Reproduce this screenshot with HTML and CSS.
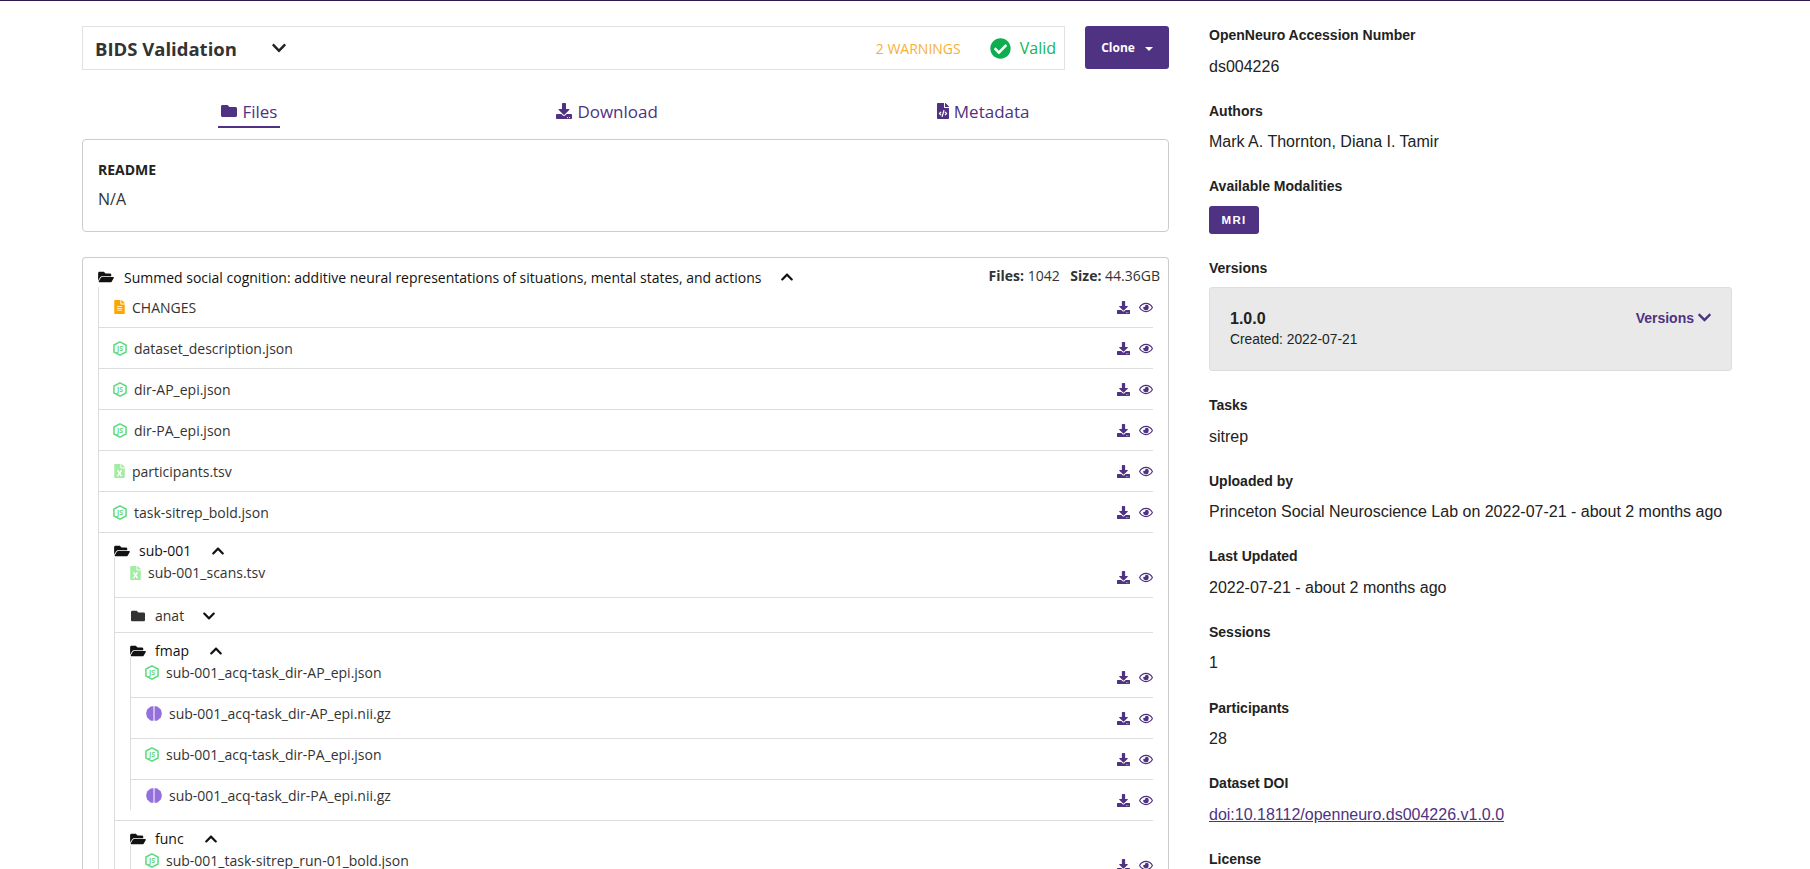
FILE: index.html
```html
<!DOCTYPE html>
<html lang="en">
<head>
    <meta charset="UTF-8" />
    <title>OpenNeuro Dataset ds004226</title>
    <link rel="stylesheet" href="styles.css">
</head>
<body>
    <svg class="sprite" xmlns="http://www.w3.org/2000/svg">
        <symbol id="i-folder" viewBox="0 0 512 512"><path d="M464 128H272l-64-64H48C21.49 64 0 85.49 0 112v288c0 26.51 21.49 48 48 48h416c26.51 0 48-21.49 48-48V176c0-26.51-21.49-48-48-48z"/></symbol>
        <symbol id="i-open" viewBox="0 0 576 512"><path d="M572.694 292.093L500.27 416.248A63.997 63.997 0 0 1 444.989 448H45.025c-18.523 0-30.064-20.093-20.731-36.093l72.424-124.155A64 64 0 0 1 152 256h399.964c18.523 0 30.064 20.093 20.73 36.093zM152 224h328v-48c0-26.51-21.49-48-48-48H272l-64-64H48C21.49 64 0 85.49 0 112v278.046l69.077-118.418C86.214 242.25 117.989 224 152 224z"/></symbol>
        <symbol id="i-download" viewBox="0 0 512 512"><path d="M216 0h80c13.3 0 24 10.7 24 24v168h87.7c17.8 0 26.7 21.5 14.1 34.1L269.7 378.3c-7.5 7.5-19.8 7.5-27.3 0L90.1 226.1c-12.6-12.6-3.7-34.1 14.1-34.1H192V24c0-13.3 10.7-24 24-24zm296 376v112c0 13.3-10.7 24-24 24H24c-13.3 0-24-10.7-24-24V376c0-13.3 10.7-24 24-24h146.7l49 49c20.1 20.1 52.5 20.1 72.6 0l49-49H488c13.3 0 24 10.7 24 24zm-124 88c0-11-9-20-20-20s-20 9-20 20 9 20 20 20 20-9 20-20zm64 0c0-11-9-20-20-20s-20 9-20 20 9 20 20 20 20-9 20-20z"/></symbol>
        <symbol id="i-eye" viewBox="0 0 576 512"><path d="M288 144a110.94 110.94 0 0 0-31.24 5 55.4 55.4 0 0 1 7.24 27 56 56 0 0 1-56 56 55.4 55.4 0 0 1-27-7.24A111.71 111.71 0 1 0 288 144zm284.52 97.4C518.29 135.59 410.93 64 288 64S57.68 135.64 3.48 241.41a32.35 32.35 0 0 0 0 29.19C57.71 376.41 165.07 448 288 448s230.32-71.64 284.52-177.41a32.35 32.35 0 0 0 0-29.19zM288 400c-98.65 0-189.09-55-237.93-144C98.91 167 189.34 112 288 112s189.09 55 237.93 144C477.1 345 386.66 400 288 400z"/></symbol>
        <symbol id="i-check" viewBox="0 0 512 512"><path d="M504 256c0 136.967-111.033 248-248 248S8 392.967 8 256 119.033 8 256 8s248 111.033 248 248zM227.314 387.314l184-184c6.248-6.248 6.248-16.379 0-22.627l-22.627-22.627c-6.248-6.249-16.379-6.249-22.628 0L216 308.118l-70.059-70.059c-6.248-6.248-16.379-6.248-22.628 0l-22.627 22.627c-6.248 6.248-6.248 16.379 0 22.627l104 104c6.249 6.25 16.379 6.25 22.628.001z"/></symbol>
        <symbol id="i-down" viewBox="0 0 448 512"><path d="M207.029 381.476L12.686 187.132c-9.373-9.373-9.373-24.569 0-33.941l22.667-22.667c9.357-9.357 24.522-9.375 33.901-.04L224 284.505l154.745-154.021c9.379-9.335 24.544-9.317 33.901.04l22.667 22.667c9.373 9.373 9.373 24.569 0 33.941L240.971 381.476c-9.373 9.372-24.569 9.372-33.942 0z"/></symbol>
        <symbol id="i-up" viewBox="0 0 448 512"><path d="M240.971 130.524l194.343 194.343c9.373 9.373 9.373 24.569 0 33.941l-22.667 22.667c-9.357 9.357-24.522 9.375-33.901.04L224 227.495 69.255 381.516c-9.379 9.335-24.544 9.317-33.901-.04l-22.667-22.667c-9.373-9.373-9.373-24.569 0-33.941L207.03 130.525c9.372-9.373 24.568-9.373 33.941-.001z"/></symbol>
        <symbol id="i-text" viewBox="0 0 384 512"><path d="M224 136V0H24C10.7 0 0 10.7 0 24v464c0 13.3 10.7 24 24 24h336c13.3 0 24-10.7 24-24V160H248c-13.2 0-24-10.8-24-24zm64 236c0 6.6-5.4 12-12 12H108c-6.6 0-12-5.4-12-12v-8c0-6.6 5.4-12 12-12h168c6.6 0 12 5.4 12 12v8zm0-64c0 6.6-5.4 12-12 12H108c-6.6 0-12-5.4-12-12v-8c0-6.6 5.4-12 12-12h168c6.6 0 12 5.4 12 12v8zm0-72v8c0 6.6-5.4 12-12 12H108c-6.6 0-12-5.4-12-12v-8c0-6.6 5.4-12 12-12h168c6.6 0 12 5.4 12 12zm96-114.1v6.1H256V0h6.1c6.4 0 12.5 2.5 17 7l97.9 98c4.5 4.5 7 10.6 7 16.9z"/></symbol>
        <symbol id="i-excel" viewBox="0 0 384 512"><path d="M224 136V0H24C10.7 0 0 10.7 0 24v464c0 13.3 10.7 24 24 24h336c13.3 0 24-10.7 24-24V160H248c-13.2 0-24-10.8-24-24zm60.1 106.5L224 336l60.1 93.5c5.1 8-.6 18.5-10.1 18.5h-34.9c-4.4 0-8.5-2.4-10.6-6.3C208.9 405.5 192 373 192 373c-6.4 14.8-10 20-36.6 68.8-2.1 3.9-6.1 6.3-10.5 6.3H110c-9.5 0-15.2-10.5-10.1-18.5l60.3-93.5-60.3-93.5c-5.2-8 .6-18.5 10.1-18.5h34.8c4.4 0 8.5 2.4 10.6 6.3 26.1 48.8 20 33.6 36.6 68.5 0 0 6.1-11.7 36.6-68.5 2.1-3.9 6.2-6.3 10.6-6.3H274c9.5-.1 15.2 10.4 10.1 18.4zM384 121.9v6.1H256V0h6.1c6.4 0 12.5 2.5 17 7l97.9 98c4.5 4.5 7 10.6 7 16.9z"/></symbol>
        <symbol id="i-code" viewBox="0 0 384 512"><path d="M384 121.941V128H256V0h6.059c6.365 0 12.47 2.529 16.971 7.029l97.941 97.941A24.005 24.005 0 0 1 384 121.941zM248 160c-13.2 0-24-10.8-24-24V0H24C10.745 0 0 10.745 0 24v464c0 13.255 10.745 24 24 24h336c13.255 0 24-10.745 24-24V160H248zM123.206 400.505a5.4 5.4 0 0 1-7.633.246l-64.866-60.812a5.4 5.4 0 0 1 0-7.879l64.866-60.812a5.4 5.4 0 0 1 7.633.246l19.579 20.885a5.4 5.4 0 0 1-.372 7.747L101.65 336l40.763 35.874a5.4 5.4 0 0 1 .372 7.747l-19.579 20.884zm51.295 50.479l-27.453-7.97a5.402 5.402 0 0 1-3.681-6.692l61.44-211.626a5.402 5.402 0 0 1 6.692-3.681l27.452 7.97a5.4 5.4 0 0 1 3.68 6.692l-61.44 211.626a5.397 5.397 0 0 1-6.69 3.681zm160.792-111.045l-64.866 60.812a5.4 5.4 0 0 1-7.633-.246l-19.58-20.885a5.4 5.4 0 0 1 .372-7.747L284.35 336l-40.763-35.874a5.4 5.4 0 0 1-.372-7.747l19.58-20.885a5.4 5.4 0 0 1 7.633-.246l64.866 60.812a5.4 5.4 0 0 1-.001 7.879z"/></symbol>
        <symbol id="i-json" viewBox="0 0 24 26"><polygon points="12,1.500 22.500,7 22.500,19 12,24.500 1.500,19 1.500,7" fill="none" stroke="currentColor" stroke-width="2.600"/><text x="12" y="17.500" text-anchor="middle" font-size="12" font-weight="700" fill="currentColor">JS</text></symbol>
        <symbol id="i-brain" viewBox="0 0 16 15"><path d="M7.500 0.300C5 -0.200 3.600 0.800 3 2 1.600 2.600 0.700 3.800 0.800 5 0 6 0 9 0.800 10 0.700 11.200 1.600 12.400 3 13 3.600 14.200 5 15.200 7.500 14.700z"/><path d="M8.500 0.300C11 -0.200 12.400 0.800 13 2 14.400 2.600 15.300 3.800 15.200 5 16 6 16 9 15.200 10 15.300 11.200 14.400 12.400 13 13 12.400 14.200 11 15.200 8.500 14.700z"/></symbol>
    </svg>

    <div class="topline"></div>
    <div class="layout">
        <main class="main-col">
            <div class="validation-row">
                <div class="validation">
                    <span class="validation-title">BIDS Validation</span>
                    <svg class="chevron chevron-title"><use href="#i-down"/></svg>
                    <span class="warnings">2 WARNINGS</span>
                    <svg class="valid-icon"><use href="#i-check"/></svg>
                    <span class="valid">Valid</span>
                </div>
                <button class="clone-btn">Clone<span class="caret"></span></button>
            </div>

            <nav class="tabs">
                <a class="tab tab-active"><svg class="tab-icon"><use href="#i-folder"/></svg>Files</a>
                <a class="tab"><svg class="tab-icon"><use href="#i-download"/></svg>Download</a>
                <a class="tab"><svg class="tab-icon tab-icon-code"><use href="#i-code"/></svg>Metadata</a>
            </nav>

            <section class="readme">
                <h4>README</h4>
                <p>N/A</p>
            </section>

            <section class="tree">
                <div class="tree-head">
                    <svg class="folder-icon"><use href="#i-open"/></svg>
                    <span class="tree-title">Summed social cognition: additive neural representations of situations, mental states, and actions</span>
                    <svg class="chevron chevron-tree"><use href="#i-up"/></svg>
                    <span class="stats"><b>Files:</b> 1042 <b class="stat-size">Size:</b> 44.36GB</span>
                </div>
                <ul class="list">
                    <li class="row"><svg class="ic ic-text"><use href="#i-text"/></svg><span class="name name-text">CHANGES</span><span class="actions"><svg class="dl"><use href="#i-download"/></svg><svg class="eye"><use href="#i-eye"/></svg></span></li>
                    <li class="row"><svg class="ic ic-json"><use href="#i-json"/></svg><span class="name">dataset_description.json</span><span class="actions"><svg class="dl"><use href="#i-download"/></svg><svg class="eye"><use href="#i-eye"/></svg></span></li>
                    <li class="row"><svg class="ic ic-json"><use href="#i-json"/></svg><span class="name">dir-AP_epi.json</span><span class="actions"><svg class="dl"><use href="#i-download"/></svg><svg class="eye"><use href="#i-eye"/></svg></span></li>
                    <li class="row"><svg class="ic ic-json"><use href="#i-json"/></svg><span class="name">dir-PA_epi.json</span><span class="actions"><svg class="dl"><use href="#i-download"/></svg><svg class="eye"><use href="#i-eye"/></svg></span></li>
                    <li class="row"><svg class="ic ic-excel"><use href="#i-excel"/></svg><span class="name name-text">participants.tsv</span><span class="actions"><svg class="dl"><use href="#i-download"/></svg><svg class="eye"><use href="#i-eye"/></svg></span></li>
                    <li class="row"><svg class="ic ic-json"><use href="#i-json"/></svg><span class="name">task-sitrep_bold.json</span><span class="actions"><svg class="dl"><use href="#i-download"/></svg><svg class="eye"><use href="#i-eye"/></svg></span></li>
                    <li class="dir">
                        <div class="dir-head"><svg class="folder-icon"><use href="#i-open"/></svg><span class="dir-name">sub-001</span><svg class="chevron"><use href="#i-up"/></svg></div>
                        <ul class="list nested">
                            <li class="row"><svg class="ic ic-excel"><use href="#i-excel"/></svg><span class="name name-text">sub-001_scans.tsv</span><span class="actions"><svg class="dl"><use href="#i-download"/></svg><svg class="eye"><use href="#i-eye"/></svg></span></li>
                            <li class="dir dir-closed">
                                <div class="dir-head"><svg class="folder-icon folder-closed"><use href="#i-folder"/></svg><span class="dir-name dir-name-closed">anat</span><svg class="chevron"><use href="#i-down"/></svg></div>
                            </li>
                            <li class="dir">
                                <div class="dir-head"><svg class="folder-icon"><use href="#i-open"/></svg><span class="dir-name">fmap</span><svg class="chevron"><use href="#i-up"/></svg></div>
                                <ul class="list nested">
                                    <li class="row"><svg class="ic ic-json"><use href="#i-json"/></svg><span class="name">sub-001_acq-task_dir-AP_epi.json</span><span class="actions"><svg class="dl"><use href="#i-download"/></svg><svg class="eye"><use href="#i-eye"/></svg></span></li>
                                    <li class="row"><svg class="ic ic-brain"><use href="#i-brain"/></svg><span class="name">sub-001_acq-task_dir-AP_epi.nii.gz</span><span class="actions"><svg class="dl"><use href="#i-download"/></svg><svg class="eye"><use href="#i-eye"/></svg></span></li>
                                    <li class="row"><svg class="ic ic-json"><use href="#i-json"/></svg><span class="name">sub-001_acq-task_dir-PA_epi.json</span><span class="actions"><svg class="dl"><use href="#i-download"/></svg><svg class="eye"><use href="#i-eye"/></svg></span></li>
                                    <li class="row"><svg class="ic ic-brain"><use href="#i-brain"/></svg><span class="name">sub-001_acq-task_dir-PA_epi.nii.gz</span><span class="actions"><svg class="dl"><use href="#i-download"/></svg><svg class="eye"><use href="#i-eye"/></svg></span></li>
                                </ul>
                            </li>
                            <li class="dir">
                                <div class="dir-head"><svg class="folder-icon"><use href="#i-open"/></svg><span class="dir-name">func</span><svg class="chevron"><use href="#i-up"/></svg></div>
                                <ul class="list nested">
                                    <li class="row"><svg class="ic ic-json"><use href="#i-json"/></svg><span class="name">sub-001_task-sitrep_run-01_bold.json</span><span class="actions"><svg class="dl"><use href="#i-download"/></svg><svg class="eye"><use href="#i-eye"/></svg></span></li>
                                </ul>
                            </li>
                        </ul>
                    </li>
                </ul>
            </section>
        </main>

        <aside class="side-col">
            <div class="meta"><h5>OpenNeuro Accession Number</h5><p>ds004226</p></div>
            <div class="meta"><h5>Authors</h5><p>Mark A. Thornton, Diana I. Tamir</p></div>
            <div class="meta meta-tight"><h5>Available Modalities</h5><span class="badge">MRI</span></div>
            <div class="meta meta-tight">
                <h5>Versions</h5>
                <div class="version-box">
                    <div>
                        <div class="version-num">1.0.0</div>
                        <div class="version-date">Created: 2022-07-21</div>
                    </div>
                    <a class="version-link">Versions<svg class="chevron"><use href="#i-down"/></svg></a>
                </div>
            </div>
            <div class="meta"><h5>Tasks</h5><p>sitrep</p></div>
            <div class="meta"><h5>Uploaded by</h5><p>Princeton Social Neuroscience Lab on 2022-07-21 - about 2 months ago</p></div>
            <div class="meta"><h5>Last Updated</h5><p>2022-07-21 - about 2 months ago</p></div>
            <div class="meta"><h5>Sessions</h5><p>1</p></div>
            <div class="meta"><h5>Participants</h5><p>28</p></div>
            <div class="meta"><h5>Dataset DOI</h5><p><a class="doi">doi:10.18112/openneuro.ds004226.v1.0.0</a></p></div>
            <div class="meta"><h5>License</h5></div>
        </aside>
    </div>
</body>
</html>
```

FILE: styles.css
```css
html, body {
    height: 100%;
    overflow: hidden;
}
body {
    margin: 0;
    background: #fff;
    color: #333;
    font-family: "Liberation Sans", Arial, sans-serif;
}
ul {
    list-style: none;
    margin: 0;
    padding: 0;
}
svg {
    fill: currentColor;
    flex: none;
}
.sprite {
    display: none;
}
.topline {
    height: 1px;
    background: #2c1b4e;
}
.layout {
    display: flex;
    gap: 40px;
    padding: 25px 0 0 82px;
}

/* left column */
.main-col {
    width: 1087px;
    flex: none;
    font-family: "Open Sans", sans-serif;
}
.validation-row {
    display: flex;
    gap: 20px;
    height: 44px;
}
.validation {
    flex: 1;
    display: flex;
    align-items: center;
    padding: 0 8px 0 12px;
    border: 1px solid #e2e2e2;
}
.validation-title {
    font-size: 18.5px;
    font-weight: 700;
    color: #333;
}
.chevron {
    width: 14px;
    height: 14px;
    color: #111;
}
.chevron-title {
    width: 16px;
    height: 16px;
    margin-left: 34px;
    color: #222;
}
.warnings {
    margin-left: auto;
    font-size: 14px;
    color: #f7b036;
}
.valid-icon {
    width: 21px;
    height: 21px;
    margin-left: 29px;
    color: #0cae4f;
}
.valid {
    margin-left: 9px;
    font-size: 16px;
    color: #12b557;
}
.clone-btn {
    width: 84px;
    height: 43px;
    border: none;
    border-radius: 3px;
    background: #4f3282;
    color: #fff;
    font-family: "Open Sans", sans-serif;
    font-size: 12px;
    font-weight: 700;
    cursor: pointer;
}
.caret {
    display: inline-block;
    margin-left: 10px;
    vertical-align: middle;
    border-top: 4px solid #fff;
    border-left: 4px solid transparent;
    border-right: 4px solid transparent;
}

.tabs {
    display: flex;
    justify-content: space-around;
    height: 69px;
}
.tab {
    display: flex;
    align-items: center;
    gap: 5px;
    height: 58px;
    padding: 26px 3px 0;
    box-sizing: border-box;
    font-size: 17px;
    color: #4f3282;
    border-bottom: 2px solid transparent;
}
.tab-active {
    border-bottom-color: #4f3282;
}
.tab-icon {
    width: 16px;
    height: 16px;
}
.tab-icon-code {
    width: 12px;
}

.readme {
    height: 93px;
    box-sizing: border-box;
    padding: 20px 15px 0;
    border: 1px solid #ccc;
    border-radius: 4px;
}
.readme h4 {
    margin: 0;
    font-size: 14px;
    line-height: 19px;
    color: #222;
}
.readme p {
    margin: 8px 0 0;
    font-size: 16px;
    line-height: 24px;
}

.tree {
    margin-top: 25px;
    border: 1px solid #ccc;
    border-bottom: none;
    border-radius: 4px 4px 0 0;
    padding: 0 15px;
    font-size: 14px;
}
.tree-head {
    display: flex;
    align-items: center;
    height: 29px;
    padding-top: 9px;
    box-sizing: border-box;
    margin-right: -7px;
}
.folder-icon {
    width: 16px;
    height: 14px;
    color: #111;
}
.folder-closed {
    color: #333;
}
.tree-title {
    margin-left: 10px;
    color: #111;
}
.chevron-tree {
    margin-left: 19px;
}
.stats {
    margin-left: auto;
    margin-top: -3px;
}
.stat-size {
    margin-left: 7px;
}
.list {
    border-left: 1px solid #ddd;
}
.row {
    display: flex;
    align-items: center;
    height: 41px;
    box-sizing: border-box;
    padding-left: 15px;
    border-bottom: 1px solid #ddd;
}
.ic {
    margin-right: 7px;
}
.ic-text, .ic-excel {
    width: 11px;
    height: 14px;
}
.ic-text {
    color: #ffa500;
}
.ic-excel {
    color: #a3eca3;
}
.ic-json {
    width: 14px;
    height: 15px;
    margin-left: -1px;
    color: #5bdc78;
}
.ic-brain {
    width: 16px;
    height: 15px;
    color: #9370db;
}
.name {
    color: #333;
}
.actions {
    display: flex;
    align-items: center;
    gap: 9px;
    margin-left: auto;
    color: #4f3282;
}
.dl {
    width: 13px;
    height: 13px;
}
.eye {
    width: 14px;
    height: 13px;
}

/* folders in the tree */
.dir {
    padding-left: 15px;
    border-bottom: 1px solid #ddd;
}
.dir-closed {
    height: 35px;
    box-sizing: border-box;
}
.dir-head {
    display: flex;
    align-items: center;
    height: 24px;
    padding-top: 12px;
    box-sizing: border-box;
    line-height: 12px;
}
.dir-name {
    margin: 0 20px 0 9px;
    color: #111;
}
.dir-name-closed {
    margin-right: 18px;
    color: #333;
}
.nested .row .name, .nested .row .ic {
    margin-bottom: 9px;
}
.nested > .dir > .nested {
    margin-bottom: 10px;
}
.nested > .dir > .nested > .row:last-child {
    height: 30px;
    padding-top: 10px;
    border-bottom: none;
}

/* right column */
.side-col {
    width: 523px;
    flex: none;
    color: #222;
}
.meta {
    margin-bottom: 25.1px;
}
.meta-tight {
    margin-bottom: 25px;
}
.meta h5 {
    margin: 0 0 10px;
    font-size: 14px;
    font-weight: 700;
    line-height: 19.5px;
    color: #222;
}
.meta p {
    margin: 0;
    font-size: 16px;
    line-height: 21px;
}
.meta-tight h5 {
    margin-bottom: 9px;
}
.badge {
    display: flex;
    align-items: center;
    justify-content: center;
    width: 50px;
    height: 28px;
    border-radius: 3px;
    background: #4f3282;
    color: #fff;
    font-size: 11.5px;
    font-weight: 700;
    letter-spacing: 1.3px;
}
.version-box {
    display: flex;
    justify-content: space-between;
    height: 84px;
    box-sizing: border-box;
    padding: 21px 19px 0 20px;
    background: #e9e9e9;
    border: 1px solid #ddd;
    border-radius: 3px;
}
.version-num {
    font-size: 16px;
    font-weight: 700;
    line-height: 20px;
}
.version-date {
    margin-top: 1px;
    font-size: 13.8px;
    line-height: 20px;
}
.version-link {
    display: flex;
    align-items: center;
    gap: 3px;
    height: 17px;
    font-size: 14px;
    font-weight: 700;
    color: #4f3282;
}
.version-link .chevron {
    color: #4f3282;
    width: 15px;
    height: 15px;
}
.doi {
    color: #4f3282;
    text-decoration: underline;
}
```
